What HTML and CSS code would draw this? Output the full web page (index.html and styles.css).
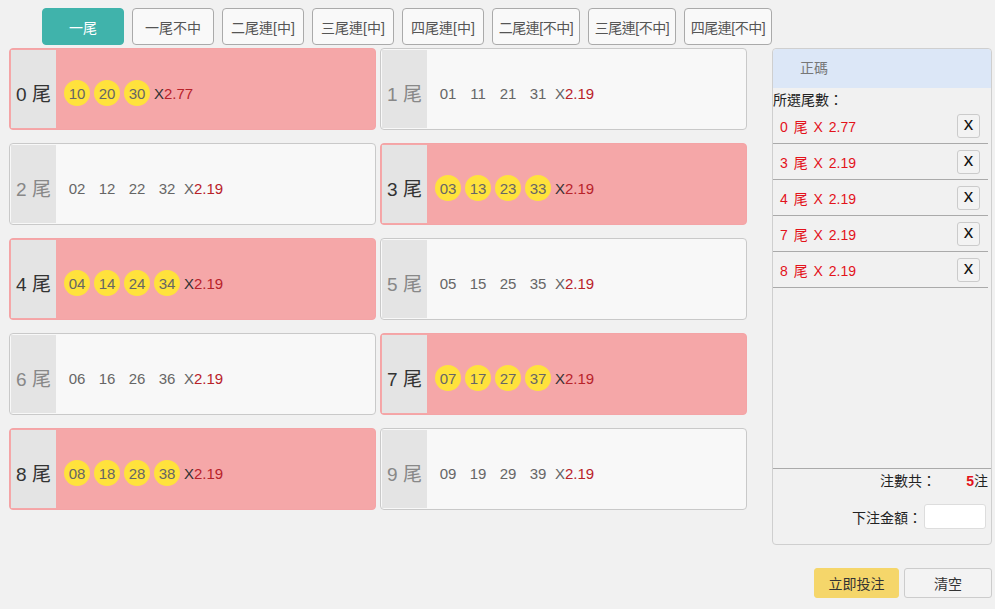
FILE: index.html
```html
<html lang="zh-Hant">
    <head>
        <title>尾數</title>

        <link rel="stylesheet" href="styles.css">
    </head>

    <body>
        <div class="wrapper">
            <div class="board">
                <div class="tabs">
                    <button class="tab active">一尾</button>
                    <button class="tab">一尾不中</button>
                    <button class="tab">二尾連[中]</button>
                    <button class="tab">三尾連[中]</button>
                    <button class="tab">四尾連[中]</button>
                    <button class="tab wide">二尾連[不中]</button>
                    <button class="tab wide">三尾連[不中]</button>
                    <button class="tab wide">四尾連[不中]</button>
                </div>

                <div class="grid">
                    <div class="card selected">
                        <div class="label">0 尾</div>
                        <div class="nums"><span class="ball">10</span><span class="ball">20</span><span class="ball">30</span><span class="odds">X<em>2.77</em></span></div>
                    </div>
                    <div class="card">
                        <div class="label">1 尾</div>
                        <div class="nums"><span class="ball">01</span><span class="ball">11</span><span class="ball">21</span><span class="ball">31</span><span class="odds">X<em>2.19</em></span></div>
                    </div>
                    <div class="card">
                        <div class="label">2 尾</div>
                        <div class="nums"><span class="ball">02</span><span class="ball">12</span><span class="ball">22</span><span class="ball">32</span><span class="odds">X<em>2.19</em></span></div>
                    </div>
                    <div class="card selected">
                        <div class="label">3 尾</div>
                        <div class="nums"><span class="ball">03</span><span class="ball">13</span><span class="ball">23</span><span class="ball">33</span><span class="odds">X<em>2.19</em></span></div>
                    </div>
                    <div class="card selected">
                        <div class="label">4 尾</div>
                        <div class="nums"><span class="ball">04</span><span class="ball">14</span><span class="ball">24</span><span class="ball">34</span><span class="odds">X<em>2.19</em></span></div>
                    </div>
                    <div class="card">
                        <div class="label">5 尾</div>
                        <div class="nums"><span class="ball">05</span><span class="ball">15</span><span class="ball">25</span><span class="ball">35</span><span class="odds">X<em>2.19</em></span></div>
                    </div>
                    <div class="card">
                        <div class="label">6 尾</div>
                        <div class="nums"><span class="ball">06</span><span class="ball">16</span><span class="ball">26</span><span class="ball">36</span><span class="odds">X<em>2.19</em></span></div>
                    </div>
                    <div class="card selected">
                        <div class="label">7 尾</div>
                        <div class="nums"><span class="ball">07</span><span class="ball">17</span><span class="ball">27</span><span class="ball">37</span><span class="odds">X<em>2.19</em></span></div>
                    </div>
                    <div class="card selected">
                        <div class="label">8 尾</div>
                        <div class="nums"><span class="ball">08</span><span class="ball">18</span><span class="ball">28</span><span class="ball">38</span><span class="odds">X<em>2.19</em></span></div>
                    </div>
                    <div class="card">
                        <div class="label">9 尾</div>
                        <div class="nums"><span class="ball">09</span><span class="ball">19</span><span class="ball">29</span><span class="ball">39</span><span class="odds">X<em>2.19</em></span></div>
                    </div>
                </div>
            </div>

            <div class="side">
                <div class="panel">
                    <div class="panel-head">正碼</div>
                    <div class="panel-title">所選尾數：</div>

                    <div class="picks">
                        <div class="pick"><span>0 尾 X 2.77</span><button class="remove">x</button></div>
                        <div class="pick"><span>3 尾 X 2.19</span><button class="remove">x</button></div>
                        <div class="pick"><span>4 尾 X 2.19</span><button class="remove">x</button></div>
                        <div class="pick"><span>7 尾 X 2.19</span><button class="remove">x</button></div>
                        <div class="pick"><span>8 尾 X 2.19</span><button class="remove">x</button></div>
                    </div>

                    <div class="summary">
                        <div class="row">
                            <span>注數共：</span>
                            <span class="count"><b>5</b>注</span>
                        </div>
                        <div class="row amount">
                            <label for="amount">下注金額：</label>
                            <input id="amount" name="amount"/>
                        </div>
                    </div>
                </div>

                <div class="actions">
                    <button class="submit">立即投注</button>
                    <button class="clear">清空</button>
                </div>
            </div>
        </div>
    </body>
</html>
```

FILE: styles.css
```css
body {
    margin: 0;
    padding: 0;
    background-color: #f1f1f1;

    font-family: "Liberation Sans", "Noto Sans CJK TC", sans-serif;
    color: #333;
}

button {
    font-family: inherit;
}

.wrapper {
    display: flex;
    align-items: flex-start;
    width: 995px;
    height: 609px;
    overflow: hidden;
}

.board {
    margin-left: 9px;
    width: 738px;
    flex-shrink: 0;
}

.tabs {
    display: flex;
    gap: 8px;
    padding: 8px 0 0 33px;
}

.tab {
    flex-shrink: 0;
    min-width: 82px;
    height: 37px;
    padding: 0 4px;
    border: 1px solid #aaa;
    border-radius: 4px;
    background-color: #f9f9f9;
    color: #555;
    font-size: 14px;
    white-space: nowrap;
}

.tab.wide {
    width: 88px;
    padding: 0;
    letter-spacing: -0.5px;
}

.tab.active {
    border-color: #40b3ab;
    background-color: #40b3ab;
    color: #fff;
}

.grid {
    display: grid;
    grid-template-columns: 367px 367px;
    column-gap: 4px;
    row-gap: 13px;
    margin-top: 3px;
}

.card {
    display: flex;
    box-sizing: border-box;
    height: 82px;
    padding: 1px;
    border: 1px solid #c9c9c9;
    border-radius: 4px;
    background-color: #f8f8f8;
}

.card.selected {
    border-color: #f4a4a6;
    background-color: #f5a7a8;
}

.label {
    display: flex;
    align-items: center;
    justify-content: center;
    width: 45px;
    padding-top: 6px;
    box-sizing: border-box;
    background-color: #e4e4e4;
    font-size: 19px;
    color: #888;
}

.card.selected .label {
    color: #333;
}

.nums {
    display: flex;
    align-items: center;
    gap: 4px;
    padding: 8px 0 0 8px;
    font-size: 15px;
}

.ball {
    display: flex;
    align-items: center;
    justify-content: center;
    width: 26px;
    height: 26px;
    border-radius: 50%;
    color: #666;
}

.card.selected .ball {
    background-color: #ffe23c;
}

.odds {
    color: #666;
    font-size: 15px;
}

.card.selected .odds {
    color: #333;
}

.odds em {
    font-style: normal;
    color: #b8222a;
}

.side {
    margin-left: 25px;
    margin-top: 48px;
    width: 220px;
    flex-shrink: 0;
}

.panel {
    display: flex;
    flex-direction: column;
    box-sizing: border-box;
    height: 497px;
    border: 1px solid #cfcfcf;
    border-radius: 4px;
}

.panel-head {
    height: 39px;
    line-height: 39px;
    padding-left: 27px;
    background-color: #dce7f7;
    border-radius: 4px 4px 0 0;
    color: #777;
    font-size: 14px;
}

.panel-title {
    height: 20px;
    line-height: 24px;
    font-size: 14px;
    color: #222;
}

.picks {
    flex-grow: 1;
    padding-right: 3px;
}

.pick {
    display: flex;
    align-items: center;
    justify-content: space-between;
    height: 35px;
    padding: 0 8px 0 7px;
    border-bottom: 1px solid #aaa;
    color: #e3131b;
    font-size: 14px;
    word-spacing: 2px;
}

.remove {
    width: 23px;
    height: 24px;
    padding: 0 0 3px 0;
    border: 1px solid #cbcbcb;
    border-radius: 3px;
    background-color: #f3f3f3;
    color: #111;
    font-size: 19px;
    line-height: 18px;
}

.summary {
    border-top: 1px solid #aaa;
    height: 75px;
    font-size: 14px;
    color: #222;
}

.row {
    display: flex;
    justify-content: flex-end;
    align-items: center;
}

.row:first-child {
    height: 22px;
    padding-right: 3px;
}

.count {
    width: 52px;
    text-align: right;
}

.count b {
    color: #e3131b;
}

.amount {
    margin-top: 13px;
    padding-right: 5px;
}

.amount input {
    width: 62px;
    height: 25px;
    margin-left: 2px;
    box-sizing: border-box;
    border: 1px solid #ddd;
    border-radius: 3px;
    background-color: #fff;
    outline: none;
}

.actions {
    display: flex;
    justify-content: flex-end;
    gap: 5px;
    margin-top: 23px;
}

.actions button {
    height: 30px;
    border-radius: 3px;
    font-size: 14px;
    color: #333;
}

.submit {
    width: 85px;
    border: 1px solid #f5d66a;
    background-color: #f5d66a;
}

.clear {
    width: 88px;
    border: 1px solid #ccc;
    background-color: #f3f3f3;
}
```
